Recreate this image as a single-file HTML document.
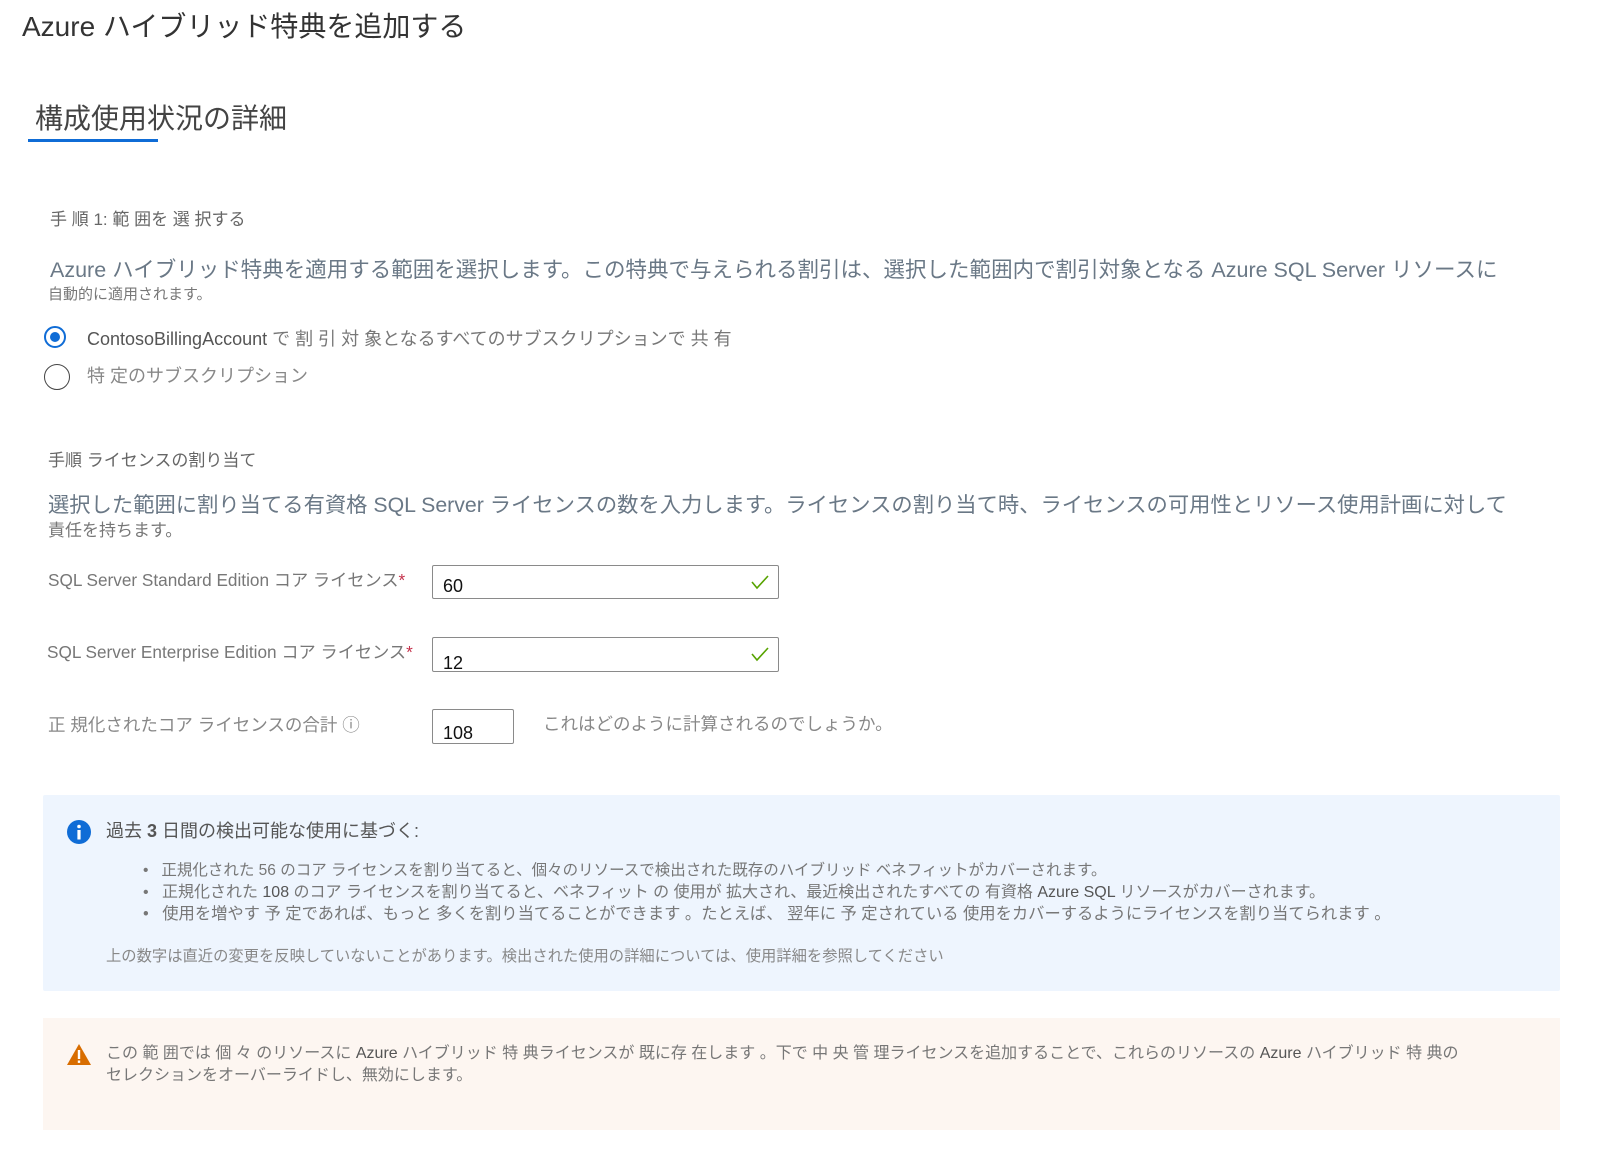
<!DOCTYPE html>
<html><head><meta charset="utf-8"><style>
body{margin:0;width:1599px;height:1151px;background:#fff;position:relative;overflow:hidden;font-family:"Liberation Sans","Noto Sans CJK JP",sans-serif;color:#666}
.a{position:absolute;white-space:nowrap;line-height:1}
.in{position:absolute;border:1px solid #8a8a8a;border-radius:2px;background:#fff;box-sizing:border-box}
.in span{position:absolute;left:10px;top:10px;font-size:18px;color:#111}
.chk{position:absolute;right:8px;top:7px}
</style></head><body>
<div class="a" style="left:22px;top:13px;font-size:28px;color:#333">Azure ハイブリッド特典を追加する</div>
<div class="a" style="left:35px;top:105px;font-size:28px;color:#444">構成使用状況の詳細</div>
<div style="position:absolute;left:28px;top:139px;width:130px;height:3px;background:#0f6cd6"></div>

<div class="a" style="left:50px;top:211px;font-size:17px">手 順 1: 範 囲を 選 択する</div>
<div class="a" style="left:50px;top:260px;font-size:21.5px;color:#6a7886">Azure ハイブリッド特典を適用する範囲を選択します。この特典で与えられる割引は、選択した範囲内で割引対象となる Azure SQL Server リソースに</div>
<div class="a" style="left:48px;top:287px;font-size:15px;color:#777">自動的に適用されます。</div>

<div style="position:absolute;left:44px;top:326px;width:22px;height:22px;border:2px solid #0f6cd6;border-radius:50%;box-sizing:border-box"><div style="position:absolute;left:4px;top:4px;width:10px;height:10px;border-radius:50%;background:#0f6cd6"></div></div>
<div class="a" style="left:87px;top:330px;font-size:18px;color:#777"><span style="color:#555">ContosoBillingAccount</span> で 割 引 対 象となるすべてのサブスクリプションで 共 有</div>
<div style="position:absolute;left:44px;top:364px;width:26px;height:26px;border:1.5px solid #444;border-radius:50%;box-sizing:border-box"></div>
<div class="a" style="left:87px;top:367px;font-size:18px;color:#888">特 定のサブスクリプション</div>

<div class="a" style="left:48px;top:452px;font-size:17px">手順 ライセンスの割り当て</div>
<div class="a" style="left:48px;top:495px;font-size:21.3px;color:#6a7886">選択した範囲に割り当てる有資格 SQL Server ライセンスの数を入力します。ライセンスの割り当て時、ライセンスの可用性とリソース使用計画に対して</div>
<div class="a" style="left:48px;top:522px;font-size:17px;color:#777">責任を持ちます。</div>

<div class="a" style="left:48px;top:572px;font-size:17.2px;color:#777">SQL Server Standard Edition コア ライセンス<span style="color:#c4314b">*</span></div>
<div class="in" style="left:432px;top:565px;width:347px;height:34px"><span>60</span><svg class="chk" width="20" height="18" viewBox="0 0 20 18"><path d="M2 9 L7 15 L18 3" fill="none" stroke="#57a300" stroke-width="1.6"/></svg></div>
<div class="a" style="left:47px;top:644px;font-size:17.2px;color:#777">SQL Server Enterprise Edition コア ライセンス<span style="color:#c4314b">*</span></div>
<div class="in" style="left:432px;top:637px;width:347px;height:35px"><span style="top:15px">12</span><svg class="chk" width="20" height="18" viewBox="0 0 20 18"><path d="M2 9 L7 15 L18 3" fill="none" stroke="#57a300" stroke-width="1.6"/></svg></div>
<div class="a" style="left:48px;top:717px;font-size:17.5px;color:#888">正 規化されたコア ライセンスの合計 ⓘ</div>
<div class="in" style="left:432px;top:709px;width:82px;height:35px"><span style="top:13px">108</span></div>
<div class="a" style="left:543px;top:716px;font-size:17.5px;color:#888">これはどのように計算されるのでしょうか。</div>

<div style="position:absolute;left:43px;top:795px;width:1517px;height:196px;background:#eef5fe;border-radius:2px"></div>
<svg style="position:absolute;left:67px;top:820px" width="24" height="24" viewBox="0 0 24 24"><circle cx="12" cy="12" r="12" fill="#0f6cd6"/><circle cx="12" cy="6.5" r="1.8" fill="#fff"/><rect x="10.4" y="10" width="3.2" height="9.5" fill="#fff"/></svg>
<div class="a" style="left:106px;top:822px;font-size:18px;color:#555">過去 <b>3</b> 日間の検出可能な使用に基づく:</div>
<div class="a" style="left:143px;top:863px;font-size:15.5px;color:#777">•&nbsp;&nbsp; 正規化された 56 のコア ライセンスを割り当てると、個々のリソースで検出された既存のハイブリッド ベネフィットがカバーされます。</div>
<div class="a" style="left:143px;top:885px;font-size:16px;color:#777">•&nbsp;&nbsp; 正規化された <span style="color:#555">108</span> のコア ライセンスを割り当てると、ベネフィット の 使用が 拡大され、最近検出されたすべての 有資格 <span style="color:#555">Azure SQL</span> リソースがカバーされます。</div>
<div class="a" style="left:143px;top:906px;font-size:16.3px;color:#777">•&nbsp;&nbsp; 使用を増やす 予 定であれば、もっと 多くを割り当てることができます 。たとえば、 翌年に 予 定されている 使用をカバーするようにライセンスを割り当てられます 。</div>
<div class="a" style="left:106px;top:949px;font-size:15.3px;color:#888">上の数字は直近の変更を反映していないことがあります。検出された使用の詳細については、使用詳細を参照してください</div>

<div style="position:absolute;left:43px;top:1018px;width:1517px;height:112px;background:#fdf6f1"></div>
<svg style="position:absolute;left:66px;top:1043px" width="26" height="23" viewBox="0 0 26 23"><path d="M13 1 L25 22 L1 22 Z" fill="#d86d00"/><rect x="11.8" y="7" width="2.4" height="9" fill="#fff"/><rect x="11.8" y="17.5" width="2.4" height="2.4" fill="#fff"/></svg>
<div class="a" style="left:106px;top:1046px;font-size:16px;color:#777">この 範 囲では 個 々 のリソースに <span style="color:#555">Azure</span> ハイブリッド 特 典ライセンスが 既に存 在します 。下で 中 央 管 理ライセンスを追加することで、これらのリソースの <span style="color:#555">Azure</span> ハイブリッド 特 典の</div>
<div class="a" style="left:106px;top:1068px;font-size:16px;color:#777">セレクションをオーバーライドし、無効にします。</div>
</body></html>
